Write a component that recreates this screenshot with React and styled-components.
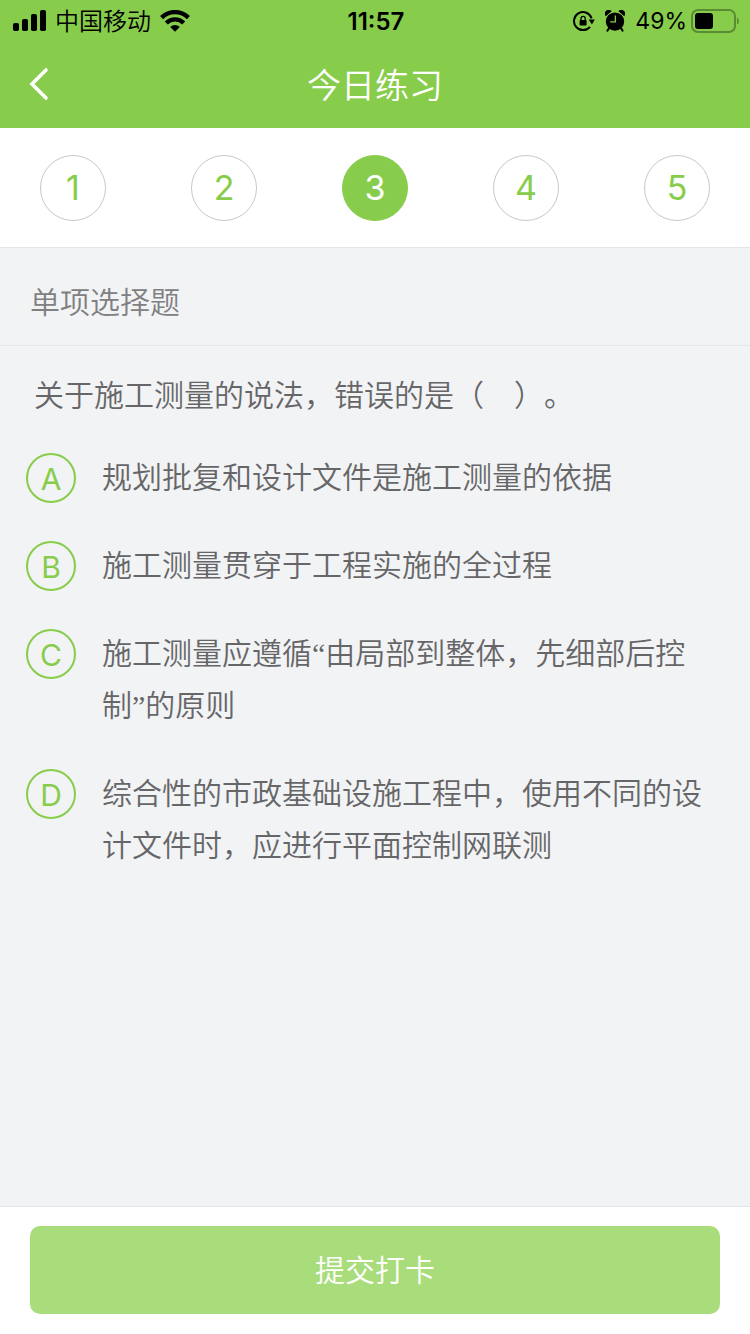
import { useState } from "react"
import styled, { createGlobalStyle } from "styled-components"

const GlobalStyle = createGlobalStyle`
  * {
    box-sizing: border-box;
  }
  body {
    margin: 0;
    background: #f2f3f5;
    font-family: Inter, "Noto Sans CJK SC", sans-serif;
    text-spacing-trim: space-all;
  }
  button, input {
    font-family: inherit;
  }
`

const Page = styled.div`
  min-height: 100vh;
  display: flex;
  flex-direction: column;
`

const Header = styled.header`
  background: #87cd4b;
`

const StatusBar = styled.div`
  height: 40px;
  padding: 0 10px 0 12px;
  display: grid;
  grid-template-columns: 1fr auto 1fr;
  align-items: center;
  color: #000;
  font-size: 24px;
  line-height: 38px;
`

const StatusGroup = styled.div`
  display: flex;
  align-items: center;
  justify-content: ${(props) => (props.$end ? "flex-end" : "flex-start")};
  gap: ${(props) => (props.$end ? "10px" : "9px")};
  svg {
    display: block;
    flex: none;
  }
`

const Carrier = styled.span`
  padding-top: 3px;
  font-weight: 350;
`

const Battery = styled.div`
  display: flex;
  align-items: center;
  gap: 4px;
  font-size: 23px;
`

const Time = styled.time`
  padding-top: 2px;
  font-weight: 600;
`

const NavBar = styled.div`
  height: 88px;
  padding: 0 22px;
  display: grid;
  grid-template-columns: 34px 1fr 34px;
  align-items: center;
`

const BackBtn = styled.button`
  padding: 0;
  border: none;
  background: none;
  cursor: pointer;
  svg {
    display: block;
  }
`

const Title = styled.h1`
  margin: 0;
  padding-top: 3px;
  color: #fff;
  font-size: 34px;
  font-weight: 350;
  line-height: 48px;
  text-align: center;
`

const Steps = styled.nav`
  height: 120px;
  padding: 0 40px;
  display: flex;
  align-items: center;
  justify-content: space-between;
  background: #fff;
  border-bottom: 1px solid #e4e5e7;
`

const Step = styled.button`
  width: 66px;
  height: 66px;
  padding: 0;
  border: 1px solid ${(props) => (props.$active ? "#87cd4b" : "#c8c8c8")};
  border-radius: 50%;
  background: ${(props) => (props.$active ? "#87cd4b" : "#fff")};
  color: ${(props) => (props.$active ? "#fff" : "#87cd4b")};
  font-size: 34px;
  font-weight: 400;
  line-height: 64px;
  cursor: pointer;
`

const SectionTitle = styled.h2`
  margin: 0;
  padding: 34px 30px 22px;
  border-bottom: 1px solid #e6e7ea;
  color: #808082;
  font-size: 30px;
  font-weight: 350;
  line-height: 41px;
`

const Question = styled.fieldset`
  flex: 1;
  min-width: 0;
  margin: 0;
  padding: 24px 34px 24px 26px;
  border: none;
  color: #666668;
  font-size: 30px;
  font-weight: 350;
  line-height: 52px;
`

const Stem = styled.p`
  margin: 0 0 12px;
  padding-left: 8px;
  font-family: "Liberation Serif", "Noto Sans CJK SC", serif;
`

const Option = styled.label`
  display: grid;
  grid-template-columns: 50px 1fr;
  column-gap: 26px;
  padding: 18px 0;
  cursor: pointer;
`

const Radio = styled.input`
  grid-area: 1 / 1;
  appearance: none;
  width: 50px;
  height: 50px;
  margin: 1px 0;
  border: 2px solid #87cd4b;
  border-radius: 50%;
  background: ${(props) => (props.checked ? "#87cd4b" : "transparent")};
  cursor: pointer;
`

const Letter = styled.span`
  grid-area: 1 / 1;
  padding-top: 2px;
  color: ${(props) => (props.$checked ? "#fff" : "#87cd4b")};
  font-weight: 400;
  line-height: 50px;
  text-align: center;
  pointer-events: none;
`

const OptionText = styled.span`
  font-family: "Liberation Serif", "Noto Sans CJK SC", serif;
`

const Footer = styled.footer`
  padding: 19px 30px 20px;
  background: #fff;
  border-top: 1px solid #e4e5e7;
`

const SubmitBtn = styled.button`
  display: block;
  width: 100%;
  height: 88px;
  padding: 0 0 4px;
  border: none;
  border-radius: 10px;
  background: #a9dd7b;
  color: #fff;
  font-size: 30px;
  font-weight: 350;
  cursor: pointer;
`

const options = [
  { key: "A", text: "规划批复和设计文件是施工测量的依据" },
  { key: "B", text: "施工测量贯穿于工程实施的全过程" },
  { key: "C", text: "施工测量应遵循“由局部到整体，先细部后控制”的原则" },
  {
    key: "D",
    text: "综合性的市政基础设施工程中，使用不同的设计文件时，应进行平面控制网联测",
  },
]

const SignalIcon = () => (
  <svg width="34" height="22" viewBox="0 0 34 22">
    <rect x="1" y="13" width="6" height="8" rx="1.8" />
    <rect x="10" y="9" width="6" height="12" rx="1.8" />
    <rect x="19" y="4" width="6" height="17" rx="1.8" />
    <rect x="28" y="0" width="6" height="21" rx="1.8" />
  </svg>
)

const WifiIcon = () => (
  <svg width="30" height="22" viewBox="0 0 30 22">
    <g fill="none" stroke="#000" strokeWidth="4.4">
      <path d="M1.6 7.6a19 19 0 0 1 26.8 0" />
      <path d="M6.3 13a12.3 12.3 0 0 1 17.4 0" />
    </g>
    <path d="M10.2 17a7 7 0 0 1 9.6 0L15 21.8z" />
  </svg>
)

const LockIcon = () => (
  <svg width="22" height="22" viewBox="0 0 22 22">
    <path
      d="M17 16.8A9 9 0 1 1 18.6 8.4"
      fill="none"
      stroke="#000"
      strokeWidth="2"
    />
    <path d="M15.6 9.6h6.2l-2.8 4.8z" />
    <rect x="6.6" y="10" width="7" height="5.6" rx="0.8" />
    <path
      d="M8 10.4V8.4a2.1 2.1 0 0 1 4.2 0v2"
      fill="none"
      stroke="#000"
      strokeWidth="1.3"
    />
  </svg>
)

const AlarmIcon = () => (
  <svg width="20" height="22" viewBox="0 0 20 22">
    <circle cx="10" cy="11.6" r="9.2" />
    <path d="M.8 6.2A3.6 3.6 0 0 1 6.6 1.2zM19.2 6.2a3.6 3.6 0 0 0-5.8-5z" />
    <path
      d="M4.4 17.6l-2 3M15.6 17.6l2 3"
      stroke="#000"
      strokeWidth="2"
      strokeLinecap="round"
    />
    <path d="M10.4 5.6v6.2H5.2" fill="none" stroke="#87cd4b" strokeWidth="1.3" />
  </svg>
)

const BatteryIcon = () => (
  <svg width="49" height="24" viewBox="0 0 49 24">
    <rect
      x="1"
      y="1"
      width="43"
      height="22"
      rx="6"
      fill="none"
      stroke="#5b8b32"
      strokeWidth="2"
    />
    <path d="M46 8.5c2.4.8 2.4 6.2 0 7z" fill="#5b8b32" />
    <rect x="4" y="4" width="18" height="16" rx="3" />
  </svg>
)

export default function App() {
  const [step, setStep] = useState(3)
  const [answer, setAnswer] = useState("")

  return (
    <Page>
      <GlobalStyle />
      <Header>
        <StatusBar>
          <StatusGroup>
            <SignalIcon />
            <Carrier>中国移动</Carrier>
            <WifiIcon />
          </StatusGroup>
          <Time>11:57</Time>
          <StatusGroup $end>
            <LockIcon />
            <AlarmIcon />
            <Battery>
              <span>49%</span>
              <BatteryIcon />
            </Battery>
          </StatusGroup>
        </StatusBar>
        <NavBar>
          <BackBtn type="button" aria-label="返回">
            <svg width="34" height="34" viewBox="0 0 34 34">
              <path
                d="M24 3L10 17l14 14"
                fill="none"
                stroke="#fff"
                strokeWidth="3.6"
                strokeLinecap="round"
              />
            </svg>
          </BackBtn>
          <Title>今日练习</Title>
        </NavBar>
      </Header>

      <Steps>
        {[1, 2, 3, 4, 5].map((n) => (
          <Step
            key={n}
            type="button"
            $active={n === step}
            onClick={() => setStep(n)}
          >
            {n}
          </Step>
        ))}
      </Steps>

      <SectionTitle>单项选择题</SectionTitle>

      <Question aria-labelledby="stem">
        <Stem id="stem">关于施工测量的说法，错误的是（　）。</Stem>
        {options.map((o) => (
          <Option key={o.key}>
            <Radio
              type="radio"
              name="answer"
              value={o.key}
              checked={answer === o.key}
              onChange={() => setAnswer(o.key)}
            />
            <Letter $checked={answer === o.key}>{o.key}</Letter>
            <OptionText>{o.text}</OptionText>
          </Option>
        ))}
      </Question>

      <Footer>
        <SubmitBtn type="button">提交打卡</SubmitBtn>
      </Footer>
    </Page>
  )
}
